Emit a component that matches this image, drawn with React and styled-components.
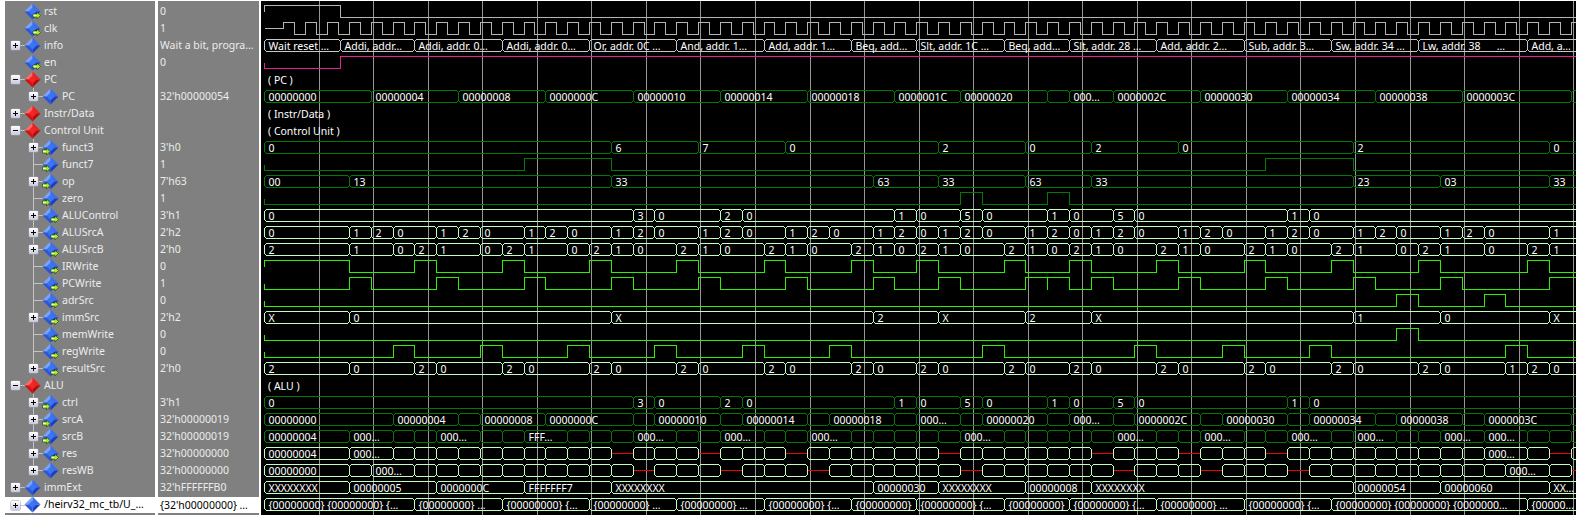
import React from 'react';
import styled, { createGlobalStyle } from 'styled-components';

const GlobalStyle = createGlobalStyle`
  html, body {
    margin: 0;
    background: #ffffff;
    overflow: hidden;
  }
`;

const FONT = `"Noto Sans", "Liberation Sans", sans-serif`;
const END = 70;
const WAVE_WIDTH = 1315;

const GRAY = '#b4b4b4';
const PINK = '#e81f96';
const DARK = '#007a00';
const PALE = '#c0ffc0';
const BRIGHT = '#2cf000';

const Window = styled.div`
  display: flex;
  height: 100vh;
  overflow: hidden;
  padding: 1px 0 0 5px;
  box-sizing: border-box;
  background: #ffffff;
  font-family: ${FONT};
  font-size: 10.5px;
`;

const NamePanel = styled.div`
  flex: none;
  width: 150px;
  padding-top: 2px;
  background: #808080;
`;

const ValuePanel = styled.div`
  flex: none;
  width: 100.5px;
  margin-left: 3px;
  padding-top: 2px;
  background: #808080;
`;

const WavePanel = styled.div`
  flex: 1;
  position: relative;
  margin-left: 2.5px;
  padding-top: 2px;
  background: #000000;
  overflow: hidden;
`;

const GridOverlay = styled.svg`
  position: absolute;
  left: 0;
  top: 0;
`;

const WaveRow = styled.svg`
  display: block;
  position: relative;
  width: ${WAVE_WIDTH}px;
  height: 17px;
  overflow: hidden;
  font-family: ${FONT};
  font-size: 10.5px;
`;

const NameRow = styled.div`
  display: flex;
  align-items: center;
  position: relative;
  height: 17px;
  box-sizing: border-box;
  color: ${(p) => (p.$selected ? '#000000' : '#ececec')};
  background: ${(p) => (p.$selected ? '#ffffff' : 'transparent')};
  border-top: ${(p) => (p.$selected ? '1px solid #808080' : 'none')};
  white-space: nowrap;

  &::before {
    content: '';
    display: ${(p) => (p.$stem ? 'block' : 'none')};
    position: absolute;
    left: 28px;
    top: 0;
    width: 1px;
    height: ${(p) => (p.$stem === 'last' ? '9px' : '17px')};
    background: #c4c4c4;
  }
`;

const ValueRow = styled.div`
  height: 17px;
  box-sizing: border-box;
  padding-left: 2px;
  line-height: 17px;
  color: ${(p) => (p.$selected ? '#000000' : '#ececec')};
  background: ${(p) => (p.$selected ? '#ffffff' : 'transparent')};
  border-top: ${(p) => (p.$selected ? '1px solid #808080' : 'none')};
  white-space: nowrap;
`;

const Gutter = styled.span`
  flex: none;
  width: ${(p) => p.$width}px;
`;

const ExpandBox = styled.span`
  flex: none;
  display: flex;
  position: relative;
  width: 9px;
  height: 9px;
  border-radius: 1px;
  background: linear-gradient(#ffffff, #c6c8dc);
  box-shadow: 0 0 0 0.5px #9a9aa8;
`;

const Connector = styled.span`
  flex: none;
  width: ${(p) => p.$width}px;
  height: 1px;
  background: #c4c4c4;
`;

const DiamondWrap = styled.svg`
  flex: none;
  width: 17px;
  height: 17px;
  margin-left: -1px;
  margin-top: -1px;
  overflow: visible;
`;

const Name = styled.span`
  margin-left: 3px;
  margin-bottom: 2px;
`;

// x of clock edge k, inside the wave panel
const edge = (k) => Math.round(22.5 + 21.82 * k) + 0.5;

const Z = '__z';

const alternating = (labels, ends) => labels.map((l, i) => [l, ends[i]]);

const aluCtl = alternating(
  ['0', '3', '0', '2', '0', '1', '0', '5', '0', '1', '0', '5', '0', '1', '0'],
  [16, 17, 20, 21, 28, 29, 31, 32, 35, 36, 38, 39, 46, 47, END],
);

const srcASel = [
  ['0', 3], ['1', 4], ['2', 5], ['0', 7], ['1', 8], ['2', 9], ['0', 11], ['1', 12], ['2', 13],
  ['0', 15], ['1', 16], ['2', 17], ['0', 19], ['1', 20], ['2', 21], ['0', 23], ['1', 24], ['2', 25],
  ['0', 27], ['1', 28], ['2', 29], ['0', 30], ['1', 31], ['2', 32], ['0', 34], ['1', 35], ['2', 36],
  ['0', 37], ['1', 38], ['2', 39], ['0', 41], ['1', 42], ['2', 43], ['0', 45], ['1', 46], ['2', 47],
  ['0', 49], ['1', 50], ['2', 51], ['0', 53], ['1', 54], ['2', 55], ['0', 58], ['1', END],
];

const srcBSel = [
  ['2', 3], ['1', 5], ['0', 6], ['2', 7], ['1', 9], ['0', 10], ['2', 11], ['1', 13], ['0', 14],
  ['2', 15], ['1', 16], ['0', 18], ['2', 19], ['1', 20], ['0', 22], ['2', 23], ['1', 24], ['0', 26],
  ['2', 27], ['1', 28], ['0', 29], ['2', 30], ['1', 31], ['0', 33], ['2', 34], ['1', 35], ['0', 36],
  ['2', 37], ['1', 38], ['0', 40], ['2', 41], ['1', 42], ['0', 44], ['2', 45], ['1', 46], ['0', 48],
  ['2', 49], ['1', 51], ['0', 52], ['2', 53], ['1', 55], ['0', 57], ['2', 58], ['1', END],
];

const resultSel = [
  ['2', 3], ['0', 6], ['2', 7], ['0', 10], ['2', 11], ['0', 14], ['2', 15], ['0', 18], ['2', 19],
  ['0', 22], ['2', 23], ['0', 26], ['2', 27], ['0', 29], ['2', 30], ['0', 33], ['2', 34], ['0', 36],
  ['2', 37], ['0', 40], ['2', 41], ['0', 44], ['2', 45], ['0', 48], ['2', 49], ['0', 52], ['2', 53],
  ['0', 56], ['1', 57], ['2', 58], ['0', END],
];

// unlabelled runs: every clock gets a segment
const run = (from, to) => {
  const out = [];
  for (let k = from; k <= to; k += 1) out.push(['', k]);
  return out;
};

const srcAVal = [
  ['00000000', 5], ['00000004', 8], ['', 9], ['00000008', 12], ['0000000C', 16], ['', 17],
  ['00000010', 20], ['', 21], ['00000014', 24], ['', 25], ['00000018', 28], ['', 29], ['000…', 31],
  ['', 32], ['00000020', 35], ['', 36], ['000…', 38], ['', 39], ['0000002C', 42], ['', 43],
  ['00000030', 46], ['', 47], ['00000034', 50], ['', 51], ['00000038', 54], ['', 55],
  ['0000003C', 59], ['', END],
];

const srcBVal = [
  ['00000004', 3], ['000…', 5], ['', 6], ['', 7], ['000…', 9], ['', 10], ['', 11], ['FFF…', 13],
  ['', 14], ['', 15], ['', 16], ['000…', 18], ['', 19], ['', 20], ['000…', 22], ['', 23], ['', 24],
  ['000…', 26], ['', 27], ['', 28], ['', 29], ['', 30], ['', 31], ['000…', 33], ['', 34], ['', 35],
  ['', 36], ['', 37], ['', 38], ['000…', 40], ['', 41], ['', 42], ['000…', 44], ['', 45], ['', 46],
  ['000…', 48], ['', 49], ['000…', 51], ['', 52], ['', 53], ['000…', 55], ['000…', 57], ['', 58],
  ['', 59], ['', END],
];

const resVal = [
  ['00000004', 3], ['000…', 5], ...run(6, 15), [Z, 16], ...run(17, 19), [Z, 20], ...run(21, 23),
  [Z, 24], ...run(25, 30), [Z, 31], ...run(32, 37), [Z, 38], ...run(39, 41), [Z, 42], ...run(43, 45),
  [Z, 46], ...run(47, 55), ['000…', 57], ['', 58], [Z, 59], ['', END],
];

const resWBVal = [
  ['00000000', 3], ['', 4], ['000…', 6], ...run(7, 16), [Z, 17], ...run(18, 20), [Z, 21], ...run(22, 24),
  [Z, 25], ...run(26, 31), [Z, 32], ...run(33, 38), [Z, 39], ...run(40, 42), [Z, 43], ...run(44, 46),
  [Z, 47], ...run(48, 56), ['000…', 58], ['', 59], [Z, END],
];

const signals = [
  { name: 'rst', value: '0', arrow: 'right', wave: { bit: GRAY, highs: [[-1, 2.6]] } },
  { name: 'clk', value: '1', arrow: 'right', wave: { clock: true } },
  {
    name: 'info', value: 'Wait a bit, progra…', toggle: '+',
    wave: {
      bus: '#c8c8c8',
      segs: [
        ['Wait reset …', 2.6], ['Addi, addr…', 6], ['Addi, addr. 0…', 10], ['Addi, addr. 0…', 14],
        ['Or, addr. 0C …', 18], ['And, addr. 1…', 22], ['Add, addr. 1…', 26], ['Beq, add…', 29],
        ['Slt, addr. 1C …', 33], ['Beq, add…', 36], ['Slt, addr. 28 …', 40], ['Add, addr. 2…', 44],
        ['Sub, addr. 3…', 48], ['Sw, addr. 34 …', 52], ['Lw, addr. 38      …', 57], ['Add, a…', END],
      ],
    },
  },
  { name: 'en', value: '0', arrow: 'right', wave: { bit: PINK, highs: [[2.6, END]] } },
  { name: 'PC', group: true, toggle: '-', wave: { label: '( PC )' } },
  {
    name: 'PC', value: "32'h00000054", level: 1, toggle: '+', stem: 'last',
    wave: {
      bus: DARK,
      segs: [
        ['00000000', 4], ['00000004', 8], ['00000008', 12], ['0000000C', 16], ['00000010', 20],
        ['00000014', 24], ['00000018', 28], ['0000001C', 31], ['00000020', 35], ['', 36], ['000…', 38],
        ['0000002C', 42], ['00000030', 46], ['00000034', 50], ['00000038', 54], ['0000003C', 59], ['', END],
      ],
    },
  },
  { name: 'Instr/Data', group: true, toggle: '+', wave: { label: '( Instr/Data )' } },
  { name: 'Control Unit', group: true, toggle: '-', wave: { label: '( Control Unit )' } },
  {
    name: 'funct3', value: "3'h0", level: 1, toggle: '+', arrow: 'left', stem: true,
    wave: {
      bus: DARK,
      segs: alternating(['0', '6', '7', '0', '2', '0', '2', '0', '2', '0'], [15, 19, 23, 30, 34, 37, 41, 49, 58, END]),
    },
  },
  { name: 'funct7', value: '1', level: 1, arrow: 'left', stem: true, wave: { bit: DARK, highs: [[11, 15], [45, 49]] } },
  {
    name: 'op', value: "7'h63", level: 1, toggle: '+', arrow: 'left', stem: true,
    wave: {
      bus: DARK,
      segs: alternating(['00', '13', '33', '63', '33', '63', '33', '23', '03', '33'], [3, 15, 27, 30, 34, 37, 49, 53, 58, END]),
    },
  },
  { name: 'zero', value: '1', level: 1, arrow: 'left', stem: true, wave: { bit: DARK, highs: [[31, 32], [35, 36]] } },
  { name: 'ALUControl', value: "3'h1", level: 1, toggle: '+', arrow: 'right', stem: true, wave: { bus: PALE, segs: aluCtl } },
  { name: 'ALUSrcA', value: "2'h2", level: 1, toggle: '+', arrow: 'right', stem: true, wave: { bus: PALE, segs: srcASel } },
  { name: 'ALUSrcB', value: "2'h0", level: 1, toggle: '+', arrow: 'right', stem: true, wave: { bus: PALE, segs: srcBSel } },
  {
    name: 'IRWrite', value: '0', level: 1, arrow: 'right', stem: true,
    wave: {
      bit: BRIGHT,
      highs: [[-1, 3], [6, 7], [10, 11], [14, 15], [18, 19], [22, 23], [26, 27], [29, 30], [33, 34], [36, 37], [40, 41], [44, 45], [48, 49], [52, 53], [57, 58]],
    },
  },
  {
    name: 'PCWrite', value: '1', level: 1, arrow: 'right', stem: true,
    wave: {
      bit: BRIGHT,
      highs: [[3, 4], [7, 8], [11, 12], [15, 16], [19, 20], [23, 24], [27, 28], [30, 31], [34, 36], [37, 38], [41, 42], [45, 46], [49, 50], [53, 54], [58, END]],
      glitch: [35],
    },
  },
  { name: 'adrSrc', value: '0', level: 1, arrow: 'right', stem: true, wave: { bit: BRIGHT, highs: [[51, 52], [55, 56]] } },
  {
    name: 'immSrc', value: "2'h2", level: 1, toggle: '+', arrow: 'right', stem: true,
    wave: {
      bus: PALE,
      segs: alternating(['X', '0', 'X', '2', 'X', '2', 'X', '1', '0', 'X'], [3, 15, 27, 30, 34, 37, 49, 53, 58, END]),
    },
  },
  { name: 'memWrite', value: '0', level: 1, arrow: 'right', stem: true, wave: { bit: BRIGHT, highs: [[51, 52]] } },
  {
    name: 'regWrite', value: '0', level: 1, arrow: 'right', stem: true,
    wave: {
      bit: BRIGHT,
      highs: [[5, 6], [9, 10], [13, 14], [17, 18], [21, 22], [25, 26], [32, 33], [39, 40], [43, 44], [47, 48], [56, 57]],
    },
  },
  { name: 'resultSrc', value: "2'h0", level: 1, toggle: '+', arrow: 'right', stem: 'last', wave: { bus: PALE, segs: resultSel } },
  { name: 'ALU', group: true, toggle: '-', wave: { label: '( ALU )' } },
  { name: 'ctrl', value: "3'h1", level: 1, toggle: '+', arrow: 'left', stem: true, wave: { bus: DARK, segs: aluCtl } },
  { name: 'srcA', value: "32'h00000019", level: 1, toggle: '+', arrow: 'left', stem: true, wave: { bus: DARK, segs: srcAVal } },
  { name: 'srcB', value: "32'h00000019", level: 1, toggle: '+', arrow: 'left', stem: true, wave: { bus: DARK, segs: srcBVal } },
  { name: 'res', value: "32'h00000000", level: 1, toggle: '+', arrow: 'right', stem: true, wave: { bus: PALE, segs: resVal } },
  { name: 'resWB', value: "32'h00000000", level: 1, toggle: '+', stem: 'last', wave: { bus: PALE, segs: resWBVal } },
  {
    name: 'immExt', value: "32'hFFFFFFB0", toggle: '+',
    wave: {
      bus: PALE,
      segs: alternating(
        ['XXXXXXXX', '00000005', '0000000C', 'FFFFFFF7', 'XXXXXXXX', '00000030', 'XXXXXXXX', '00000008', 'XXXXXXXX', '00000054', '00000060', 'XX…'],
        [3, 7, 11, 15, 27, 30, 34, 37, 49, 53, 58, END],
      ),
    },
  },
  {
    name: '/heirv32_mc_tb/U_…', value: "{32'h00000000} …", toggle: '+', selected: true,
    wave: {
      bus: PALE,
      segs: [
        ['{00000000} {00000000} {…', 6], ['{00000000} …', 10], ['{00000000} {…', 14], ['{00000000} …', 18],
        ['{00000000} …', 22], ['{00000000} {…', 26], ['{00000000}', 29], ['{00000000} {…', 33], ['{00000000}', 36],
        ['{00000000} {…', 40], ['{00000000} …', 44], ['{00000000} {…', 48],
        ['{00000000} {00000000} {0000000…', 57], ['{00000…', END],
      ],
    },
  },
];

const Diamond = ({ group, arrow }) => {
  const c = group
    ? ['#f86a6a', '#ee2020', '#b80808', '#d41010', '#f02626']
    : ['#7aa4f8', '#3a70f0', '#1c3cc4', '#2a56dc', '#3c74f2'];
  return (
    <DiamondWrap viewBox="0 0 17 17">
      <polygon points="8.5,0.5 0.5,8.5 8.5,8.5" fill={c[0]} />
      <polygon points="8.5,0.5 16.5,8.5 8.5,8.5" fill={c[1]} />
      <polygon points="16.5,8.5 8.5,16.5 8.5,8.5" fill={c[2]} />
      <polygon points="0.5,8.5 8.5,16.5 8.5,8.5" fill={c[3]} />
      <polygon points="8.5,4.5 12.5,8.5 8.5,12.5 4.5,8.5" fill={c[4]} />
      {arrow === 'right' && (
        <g strokeWidth="0.6" stroke="#10420a">
          <polygon points="9,11 13,11 13,9 16.5,12.5 13,16 13,14 9,14" fill="#a8ec1c" />
          <path d="M9.5 12.5H12.5" stroke="#f4ffd0" strokeWidth="1.6" />
        </g>
      )}
      {arrow === 'left' && (
        <g strokeWidth="0.6" stroke="#10420a">
          <polygon points="0.5,11 4.5,11 4.5,9 8,12.5 4.5,16 4.5,14 0.5,14" fill="#a8ec1c" />
          <path d="M1 12.5H4" stroke="#f4ffd0" strokeWidth="1.6" />
        </g>
      )}
    </DiamondWrap>
  );
};

const Toggle = ({ sign }) => (
  <ExpandBox>
    <svg width="9" height="9" shapeRendering="crispEdges">
      <path d={sign === '+' ? 'M2 4.5H7M4.5 2V7' : 'M2 4.5H7'} stroke="#000000" fill="none" />
    </svg>
  </ExpandBox>
);

const SignalName = ({ s }) => {
  const nested = s.level === 1;
  return (
    <NameRow $selected={s.selected} $stem={s.stem}>
      {nested ? (
        s.toggle ? (
          <>
            <Gutter $width={24} />
            <Toggle sign={s.toggle} />
            <Connector $width={5} />
          </>
        ) : (
          <>
            <Gutter $width={28} />
            <Connector $width={10} />
          </>
        )
      ) : s.toggle ? (
        <>
          <Gutter $width={6} />
          <Toggle sign={s.toggle} />
          <Connector $width={5} />
        </>
      ) : (
        <Gutter $width={20} />
      )}
      <Diamond group={s.group} arrow={s.arrow} />
      <Name>{s.name}</Name>
    </NameRow>
  );
};

const TOP = 2.5;
const BOTTOM = 14.5;
const MID = 8.5;

const Bus = ({ color, segs }) => {
  let start = 3.5;
  return (
    <>
      {segs.map(([label, endK], i) => {
        const x0 = start;
        const x1 = endK >= END ? WAVE_WIDTH + 10 : edge(endK);
        start = x1;
        if (label === Z) {
          return (
            <g key={i}>
              <path d={`M${x0} ${MID}H${x1}`} stroke="#f00000" fill="none" />
              <path d={`M${x1} ${TOP + 2}V${BOTTOM - 2}`} stroke="#f00000" fill="none" />
            </g>
          );
        }
        return (
          <g key={i}>
            <path
              d={`M${x0} ${TOP + 2}L${x0 + 2} ${TOP}H${x1 - 2}L${x1} ${TOP + 2}V${BOTTOM - 2}L${x1 - 2} ${BOTTOM}H${x0 + 2}L${x0} ${BOTTOM - 2}Z`}
              stroke={color}
              fill="none"
            />
            {label && (
              <text x={x0 + 4} y={12.5} fill="#ffffff" shapeRendering="auto" xmlSpace="preserve">
                {label}
              </text>
            )}
          </g>
        );
      })}
    </>
  );
};

const Bit = ({ color, highs, glitch = [] }) => {
  const first = highs[0][0] < 0;
  let d = `M3.5 ${MID}V${first ? TOP : BOTTOM}`;
  highs.forEach(([a, b], i) => {
    if (a >= 0) d += `H${edge(a)}V${TOP}`;
    d += `H${b >= END ? WAVE_WIDTH + 10 : edge(b)}`;
    if (b < END) d += `V${BOTTOM}`;
    if (i === highs.length - 1 && b < END) d += `H${WAVE_WIDTH + 10}`;
  });
  glitch.forEach((k) => {
    d += `M${edge(k)} ${TOP}V${BOTTOM}`;
  });
  return <path d={d} stroke={color} fill="none" />;
};

const Clock = () => {
  let d = `M3.5 ${MID}H22.5V${TOP}`;
  for (let k = 0; k < 60; k += 1) {
    const fall = Math.round(22.5 + 21.82 * (k + 0.5)) + 0.5;
    const rise = edge(k + 1);
    d += `H${fall}V${BOTTOM}H${rise}V${TOP}`;
  }
  return <path d={d} stroke={GRAY} fill="none" />;
};

const Wave = ({ wave }) => (
  <WaveRow shapeRendering="crispEdges">
    {wave.clock && <Clock />}
    {wave.bit && <Bit color={wave.bit} highs={wave.highs} glitch={wave.glitch} />}
    {wave.bus && <Bus color={wave.bus} segs={wave.segs} />}
    {wave.label && (
      <text x={7} y={12.5} fill="#ffffff" shapeRendering="auto">
        {wave.label}
      </text>
    )}
  </WaveRow>
);

const gridLines = Array.from({ length: 24 }, (_, i) => Math.round(3 + 54.55 * (i + 1)) + 0.5);

const Grid = () => (
  <GridOverlay width={WAVE_WIDTH} height={515} shapeRendering="crispEdges">
    {gridLines.map((x) => (
      <path key={x} d={`M${x} 0V515`} stroke="#969696" />
    ))}
  </GridOverlay>
);

const App = () => (
  <Window>
    <GlobalStyle />
    <NamePanel>
      {signals.map((s, i) => (
        <SignalName key={i} s={s} />
      ))}
      <SignalName s={{ name: '' }} />
    </NamePanel>
    <ValuePanel>
      {signals.map((s, i) => (
        <ValueRow key={i} $selected={s.selected}>
          {s.value}
        </ValueRow>
      ))}
    </ValuePanel>
    <WavePanel>
      <Grid />
      {signals.map((s, i) => (
        <Wave key={i} wave={s.wave} />
      ))}
    </WavePanel>
  </Window>
);

export default App;
